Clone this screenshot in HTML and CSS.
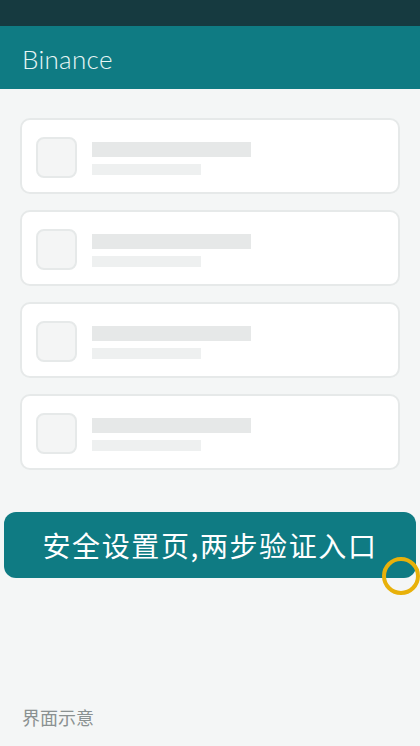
FILE: index.html
```html
<!DOCTYPE html>
<html lang="zh">
<head>
<meta charset="utf-8">
<link rel="stylesheet" href="styles.css">
</head>
<body>
<div class="status"></div>
<header class="appbar"><span class="title">Binance</span></header>
<main class="list">
  <div class="card"><div class="thumb"></div><div class="lines"><div class="l1"></div><div class="l2"></div></div></div>
  <div class="card"><div class="thumb"></div><div class="lines"><div class="l1"></div><div class="l2"></div></div></div>
  <div class="card"><div class="thumb"></div><div class="lines"><div class="l1"></div><div class="l2"></div></div></div>
  <div class="card"><div class="thumb"></div><div class="lines"><div class="l1"></div><div class="l2"></div></div></div>
</main>
<div class="banner-wrap">
  <div class="banner">安全设置页,两步验证入口</div>
  <div class="ring"></div>
</div>
<div class="spacer"></div>
<footer class="foot">界面示意</footer>
</body>
</html>
```
FILE: styles.css
```css
html, body { margin: 0; padding: 0; }
body {
  width: 420px;
  height: 746px;
  background: #f4f6f6;
  font-family: "Noto Sans", "Noto Sans CJK SC", sans-serif;
  display: flex;
  flex-direction: column;
  overflow: hidden;
}
.status { height: 26px; background: #163a40; flex: none; }
.appbar {
  height: 63px;
  background: #0f7b83;
  display: flex;
  align-items: center;
  padding-left: 22px;
  flex: none;
}
.title {
  color: #e8f6f6;
  font-family: Lato, sans-serif;
  font-weight: 300;
  font-size: 26px;
  letter-spacing: 0.3px;
  margin-top: 2px;
}
.list {
  padding: 29px 20px 0 20px;
  display: flex;
  flex-direction: column;
  gap: 16px;
}
.card {
  height: 72px;
  background: #fff;
  border: 2px solid #e6e9e9;
  border-radius: 10px;
  display: flex;
  align-items: center;
  padding-left: 14px;
}
.thumb {
  width: 37px;
  height: 37px;
  border: 2px solid #e6e9e9;
  border-radius: 8px;
  background: #f4f5f5;
  margin-top: 2px;
}
.lines {
  margin-left: 15px;
  display: flex;
  flex-direction: column;
  gap: 7px;
  margin-top: 4px;
}
.l1 { width: 159px; height: 15px; background: #e6e8e8; }
.l2 { width: 109px; height: 11px; background: #eef0f0; }
.banner-wrap {
  position: relative;
  margin-top: 42px;
  padding: 0 4px;
}
.banner {
  height: 66px;
  background: #0f7b83;
  border-radius: 12px;
  color: #ffffff;
  font-family: "Noto Sans CJK SC", sans-serif;
  font-size: 28px;
  display: flex;
  align-items: center;
  justify-content: center;
  letter-spacing: 1.6px;
}
.ring {
  position: absolute;
  left: 382px;
  top: 45px;
  width: 30px;
  height: 30px;
  border: 4.5px solid #e8b10a;
  border-radius: 50%;
}
.spacer { flex: 1; }
.foot {
  padding-left: 22px;
  height: 42px;
  color: #8a9191;
  font-family: "Noto Sans CJK SC", sans-serif;
  font-size: 18px;
  flex: none;
}
```
